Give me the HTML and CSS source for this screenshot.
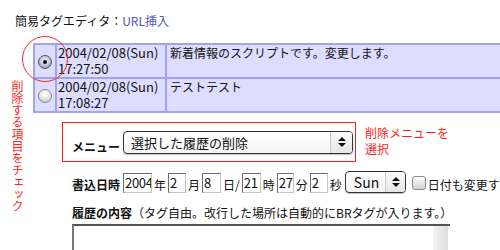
FILE: index.html
```html
<!DOCTYPE html>
<html lang="ja">
<head>
	<meta charset="UTF-8">
	<title>簡易タグエディタ</title>
	<link rel="stylesheet" href="styles.css">
</head>
<body>
	<div class="page">
		<h1 class="title">簡易タグエディタ：<span class="link">URL挿入</span></h1>

		<div class="list">
			<table class="hist">
				<tr>
					<td class="pick"><span class="radio on"></span></td>
					<td class="date">2004/02/08(Sun)<br>17:27:50</td>
					<td class="msg">新着情報のスクリプトです。変更します。</td>
				</tr>
				<tr>
					<td class="pick"><span class="radio"></span></td>
					<td class="date">2004/02/08(Sun)<br>17:08:27</td>
					<td class="msg">テストテスト</td>
				</tr>
			</table>
			<span class="ring"></span>
			<p class="note-left">削除する項目をチェック</p>
		</div>

		<div class="menu-row">
			<div class="menu-box">
				<b class="label">メニュー</b>
				<div class="sel wide">選択した履歴の削除<span class="arrows"></span></div>
			</div>
			<p class="note-right">削除メニューを<br>選択</p>
		</div>

		<div class="date-row">
			<b class="label">書込日時</b>
			<span class="inp w29">2004</span><span class="unit">年</span>
			<span class="inp w18">2</span><span class="unit">月</span>
			<span class="inp w19">8</span><span class="unit">日/</span>
			<span class="inp w19">21</span><span class="unit">時</span>
			<span class="inp w17">27</span><span class="unit">分</span>
			<span class="inp w18">2</span><span class="unit">秒</span>
			<div class="sel day">Sun<span class="arrows"></span></div>
			<span class="check"></span><span class="unit">日付も変更する</span>
		</div>

		<p class="body-label"><b>履歴の内容</b>（タグ自由。改行した場所は自動的にBRタグが入ります。）</p>
		<div class="textarea"><span class="scroll"></span></div>
	</div>
</body>
</html>
```

FILE: styles.css
```css
*{
	margin: 0;
	padding: 0;
	box-sizing: border-box;
}
body{
	background: #fff;
	overflow: hidden;
	font-family: "Noto Sans CJK JP", "Liberation Sans", sans-serif;
	font-size: 12px;
	color: #111;
}
.page{
	width: 500px;
	height: 250px;
	overflow: hidden;
	padding-top: 12px;
}
.title{
	font-size: 12px;
	font-weight: normal;
	line-height: 18px;
	margin-left: 15px;
	white-space: nowrap;
}
.link{
	color: #5656b0;
}

/* 履歴リスト */
.list{
	position: relative;
	margin-top: 13px;
	height: 70px;
}
.hist{
	margin-left: 33px;
	width: 480px;
	border-spacing: 0;
	border-collapse: separate;
	border-top: 2px solid #a2a2f4;
	border-left: 2px solid #a2a2f4;
	font-size: 13px;
	line-height: 16px;
}
.hist td{
	background: #ddddff;
	border-right: 2px solid #a2a2f4;
	border-bottom: 2px solid #a2a2f4;
	height: 34px;
	vertical-align: top;
	white-space: nowrap;
}
.hist .pick{
	width: 22px;
	vertical-align: middle;
	text-align: center;
}
.hist .date{
	width: 110px;
	padding-left: 1px;
}
.hist .msg{
	padding-left: 3px;
	font-size: 12px;
}
.radio{
	display: inline-block;
	width: 14px;
	height: 14px;
	border-radius: 50%;
	border: 1px solid #8a8a8a;
	background: radial-gradient(circle at 50% 35%, #fff 0, #e8e8e8 45%, #b4b4b4 100%);
	vertical-align: middle;
	margin-top: 1px;
	position: relative;
}
.radio.on{
	border-color: #555c66;
	background: radial-gradient(circle at 50% 40%, #f4f6f8 0, #c6cdd6 45%, #6f7985 100%);
}
.radio.on::after{
	content: "";
	position: absolute;
	left: 4px;
	top: 4px;
	width: 4px;
	height: 4px;
	border-radius: 50%;
	background: #111;
}
.ring{
	position: absolute;
	left: 22px;
	top: -7px;
	width: 46px;
	height: 46px;
	border: 1px solid #ee2a2a;
	border-radius: 50%;
}
.note-left{
	position: absolute;
	left: 11px;
	top: 37px;
	height: 140px;
	writing-mode: vertical-rl;
	color: #ff1f1f;
	font-size: 12px;
	line-height: 12px;
	white-space: nowrap;
}

/* メニュー */
.menu-row{
	display: flex;
	margin-top: 9px;
	margin-left: 62px;
}
.menu-box{
	display: flex;
	align-items: flex-end;
	width: 294px;
	height: 40px;
	border: 1px solid #ff1a1a;
	padding: 0 0 7px 9px;
}
.label{
	font-size: 12px;
	line-height: 14px;
	margin-right: 3px;
}
.sel{
	position: relative;
	height: 23px;
	border: 1px solid #333;
	border-radius: 4px;
	background: linear-gradient(#fff, #f4f4f4);
	font-size: 13px;
	line-height: 21px;
	padding-left: 7px;
	white-space: nowrap;
	box-shadow: 0 1px 1px rgba(0,0,0,0.25);
}
.sel.wide{
	width: 230px;
}
.arrows{
	position: absolute;
	right: 0;
	top: 0;
	width: 22px;
	height: 21px;
	border-left: 1px solid #c8c8c8;
	background: linear-gradient(#fafafa, #e6e6e6);
	border-radius: 0 3px 3px 0;
}
.arrows::before,
.arrows::after{
	content: "";
	position: absolute;
	left: 7px;
	border-left: 4px solid transparent;
	border-right: 4px solid transparent;
}
.arrows::before{
	top: 5px;
	border-bottom: 4px solid #111;
}
.arrows::after{
	top: 11px;
	border-top: 4px solid #111;
}
.note-right{
	margin-left: 9px;
	margin-top: 3px;
	color: #ff1f1f;
	font-size: 12px;
	line-height: 16px;
}

/* 日時 */
.date-row{
	display: flex;
	align-items: flex-end;
	margin-top: 9px;
	margin-left: 72px;
	height: 22px;
	white-space: nowrap;
}
.date-row .label{
	margin-right: 3px;
	margin-bottom: 1px;
}
.inp{
	display: block;
	flex: none;
	height: 20px;
	border: 1px solid;
	border-color: #6e6e6e #c4c4c4 #c4c4c4 #6e6e6e;
	font-size: 13px;
	line-height: 18px;
	padding-left: 1px;
	letter-spacing: -0.3px;
	overflow: hidden;
	white-space: nowrap;
	background: #fff;
}
.w17{ width: 17px; }
.w18{ width: 18px; }
.w19{ width: 19px; }
.w29{ width: 29px; }
.unit{
	flex: none;
	font-size: 12px;
	line-height: 14px;
	margin: 0 2px 1px 2px;
}
.sel.day{
	flex: none;
	width: 61px;
	height: 22px;
	margin-left: 1px;
	font-size: 14px;
	line-height: 20px;
	padding-left: 8px;
}
.sel.day .arrows{
	width: 20px;
	height: 20px;
}
.sel.day .arrows::before,
.sel.day .arrows::after{
	left: 6px;
}
.check{
	display: block;
	flex: none;
	width: 14px;
	height: 14px;
	margin: 0 0 3px 6px;
	border: 1px solid #8a8a8a;
	border-radius: 3px;
	background: linear-gradient(#fdfdfd, #d0d0d0);
}

/* 本文 */
.body-label{
	margin: 13px 0 0 72px;
	font-size: 12px;
	line-height: 14px;
	white-space: nowrap;
}
.textarea{
	position: relative;
	margin: 4px 0 0 72px;
	width: 378px;
	height: 40px;
	border-top: 2px solid #555;
	border-left: 2px solid #777;
	background: #fff;
}
.scroll{
	position: absolute;
	right: 2px;
	top: 0;
	width: 15px;
	height: 100%;
	background: linear-gradient(to right, #f4f4f4, #dcdcdc);
}
```
